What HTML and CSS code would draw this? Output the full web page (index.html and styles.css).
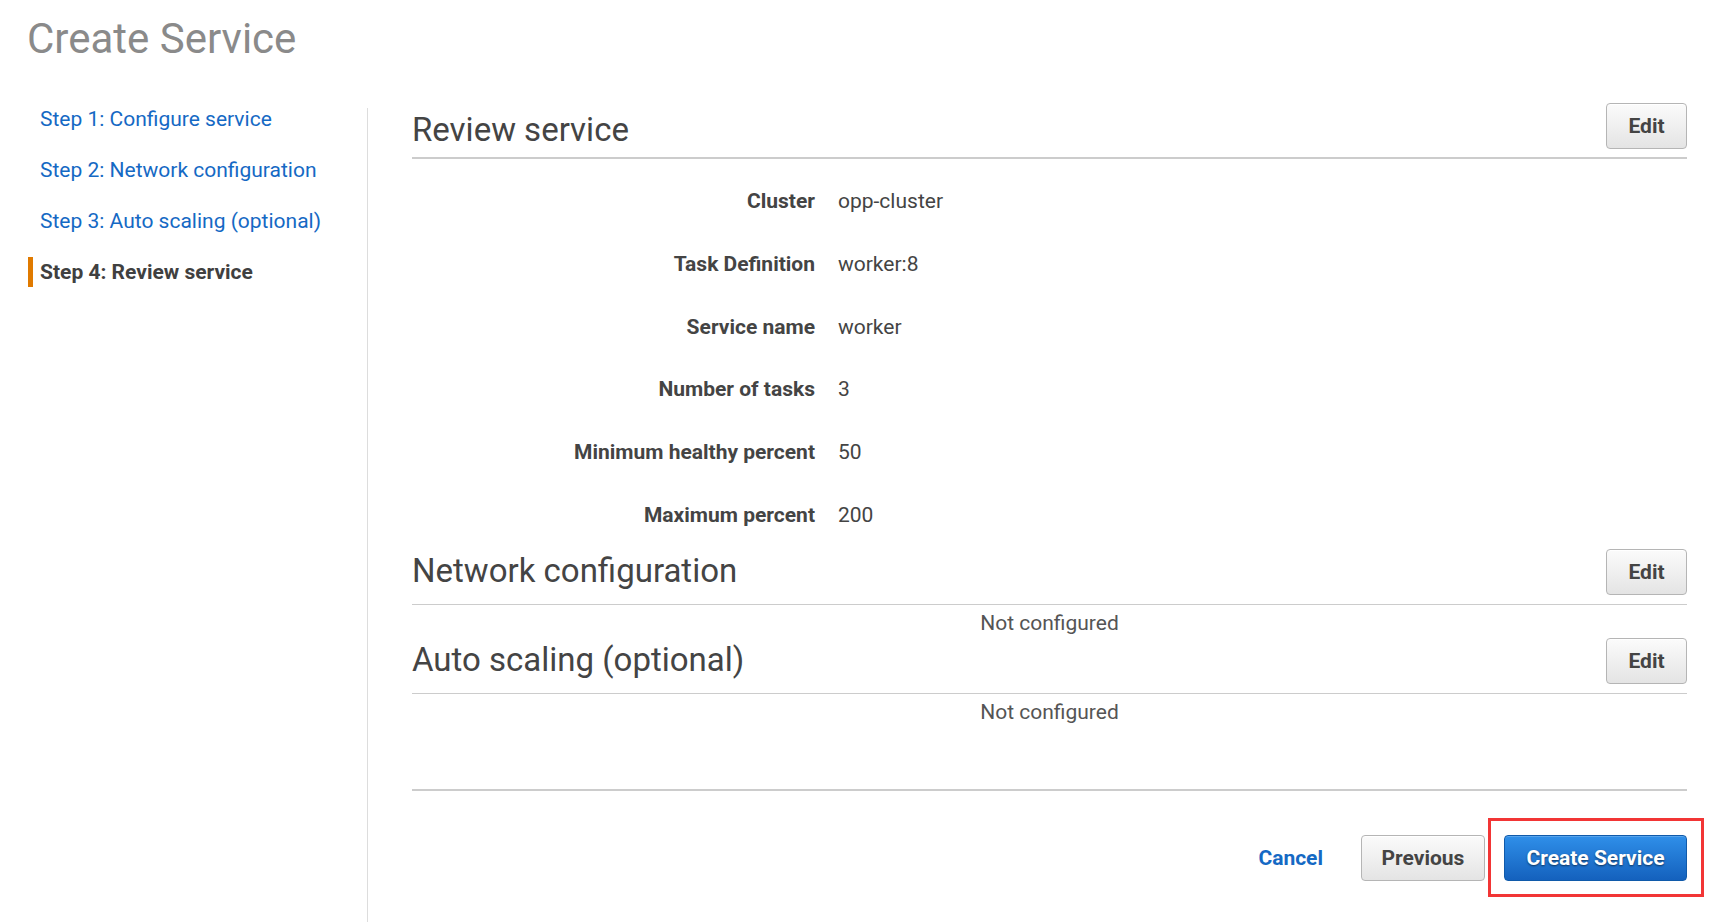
FILE: index.html
```html
<!DOCTYPE html>
<html lang="en">
<head>
<meta charset="utf-8">
<title>Create Service</title>
<link rel="stylesheet" href="styles.css">
</head>
<body>
<div class="page">
  <h1 class="page-title">Create Service</h1>
  <div class="layout">
    <nav class="sidebar">
      <ul class="steps">
        <li class="step"><a href="#">Step 1: Configure service</a></li>
        <li class="step"><a href="#">Step 2: Network configuration</a></li>
        <li class="step"><a href="#">Step 3: Auto scaling (optional)</a></li>
        <li class="step current">Step 4: Review service</li>
      </ul>
    </nav>
    <main class="content">
      <section class="section section-first">
        <div class="section-head">
          <h2 class="section-title">Review service</h2>
          <button class="btn btn-edit">Edit</button>
        </div>
        <dl class="details">
          <dt>Cluster</dt><dd>opp-cluster</dd>
          <dt>Task Definition</dt><dd>worker:8</dd>
          <dt>Service name</dt><dd>worker</dd>
          <dt>Number of tasks</dt><dd>3</dd>
          <dt>Minimum healthy percent</dt><dd>50</dd>
          <dt>Maximum percent</dt><dd>200</dd>
        </dl>
      </section>
      <section class="section">
        <div class="section-head">
          <h2 class="section-title">Network configuration</h2>
          <button class="btn btn-edit">Edit</button>
        </div>
        <p class="empty">Not configured</p>
      </section>
      <section class="section">
        <div class="section-head">
          <h2 class="section-title">Auto scaling (optional)</h2>
          <button class="btn btn-edit">Edit</button>
        </div>
        <p class="empty">Not configured</p>
      </section>
      <div class="footer">
        <a class="cancel" href="#">Cancel</a>
        <button class="btn btn-prev">Previous</button>
        <span class="highlight">
          <button class="btn btn-primary">Create Service</button>
          <span class="highlight-box"></span>
        </span>
      </div>
    </main>
  </div>
</div>
</body>
</html>
```

FILE: styles.css
```css
* { box-sizing: border-box; }

html, body {
  margin: 0;
  padding: 0;
  background: #ffffff;
}

body {
  font-family: Roboto, "Liberation Sans", Arial, sans-serif;
  color: #444444;
  font-size: 21px;
  overflow: hidden;
}

.page {
  width: 1732px;
  height: 922px;
  display: flex;
  flex-direction: column;
}

.page-title {
  margin: 14px 0 39px 27px;
  font-size: 42px;
  line-height: 50px;
  font-weight: 400;
  color: #8a8a8a;
}

.layout {
  flex: 1;
  display: flex;
  align-items: stretch;
}

.sidebar {
  width: 368px;
  flex: none;
  margin-top: 5px;
  padding-left: 28px;
  border-right: 1px solid #dddddd;
}

.steps {
  list-style: none;
  margin: -4px 0 0;
  padding: 0;
  display: flex;
  flex-direction: column;
  gap: 21.1px;
}

.step {
  font-size: 21px;
  line-height: 30px;
  padding-left: 12px;
}

.step a {
  color: #1569c4;
  text-decoration: none;
}

.step.current {
  border-left: 5px solid #e07a00;
  padding-left: 7px;
  font-weight: 700;
  color: #404040;
}

.content {
  flex: 1;
  padding: 0 45px 0 44px;
}

.section-head {
  height: 56px;
  display: flex;
  justify-content: space-between;
  align-items: flex-start;
  border-bottom: 1px solid #cccccc;
}

.section-first .section-head {
  border-bottom: 2px solid #cccccc;
}

.section-title {
  margin: 3px 0 0;
  font-size: 33px;
  line-height: 38px;
  font-weight: 400;
  color: #444444;
}

.section-first .section-title {
  margin-top: 8px;
}

.section + .section {
  margin-top: 3px;
}

.section-first + .section {
  margin-top: 22px;
}

.btn {
  font-family: Roboto, "Liberation Sans", Arial, sans-serif;
  font-size: 21px;
  font-weight: 700;
  height: 46px;
  padding: 0;
  border-radius: 4px;
  cursor: pointer;
}

.btn-edit, .btn-prev {
  color: #444444;
  background: linear-gradient(#fbfbfb, #e4e4e4);
  border: 1px solid #b5b5b5;
  box-shadow: inset 0 1px 0 #ffffff;
}

.btn-edit {
  width: 81px;
}

.btn-prev {
  width: 124px;
}

.details {
  margin: 0;
  padding-top: 30px;
  display: grid;
  grid-template-columns: 403px 1fr;
  column-gap: 23px;
  row-gap: 38.8px;
  line-height: 24px;
}

.details dt {
  text-align: right;
  font-weight: 700;
  color: #444444;
}

.details dd {
  margin: 0;
  color: #444444;
}

.empty {
  margin: 6px 0 0;
  line-height: 24px;
  text-align: center;
  color: #555555;
}

.footer {
  margin-top: 65px;
  border-top: 2px solid #cccccc;
  padding-top: 44px;
  display: flex;
  justify-content: flex-end;
  align-items: center;
}

.cancel {
  font-weight: 700;
  color: #1569c4;
  text-decoration: none;
  margin-right: 38px;
}

.highlight {
  position: relative;
  display: inline-flex;
  margin-left: 19px;
}

.btn-primary {
  width: 183px;
  color: #ffffff;
  background: linear-gradient(#2f8fe9, #1461bd);
  border: 1px solid #105aaa;
  text-shadow: 0 1px 2px rgba(0, 0, 0, 0.55);
  box-shadow: inset 0 1px 0 rgba(255, 255, 255, 0.2);
}

.highlight-box {
  position: absolute;
  left: -16px;
  right: -17px;
  top: -17px;
  bottom: -16px;
  border: 3px solid #f23535;
  pointer-events: none;
}
```
